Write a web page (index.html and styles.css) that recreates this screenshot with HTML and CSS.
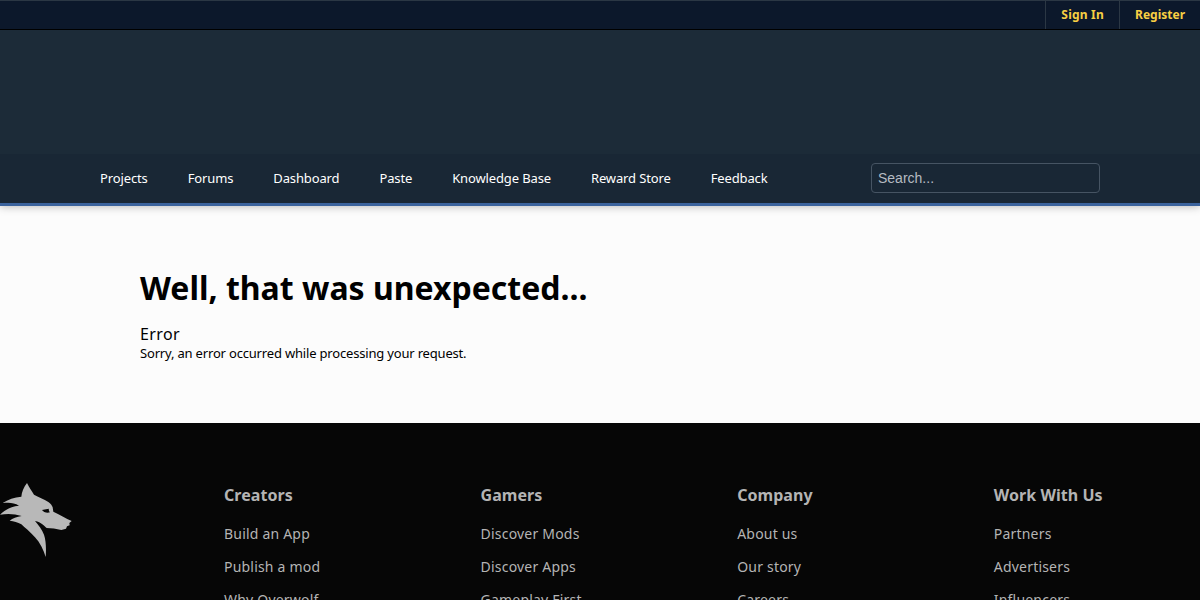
FILE: index.html
```html
<!DOCTYPE html>
<html lang="en">
<head>
    <meta charset="UTF-8">
    <meta name="viewport" content="width=device-width, initial-scale=1.0">
    <title>Error</title>
    <link rel="stylesheet" href="styles.css">
</head>
<body>

    <header class="header">
        <div class="user-bar">
            <a href="#" class="sign-in">Sign In</a>
            <a href="#">Register</a>
        </div>
        <div class="banner"></div>
        <div class="nav-bar">
            <nav class="main-nav">
                <a href="#">Projects</a>
                <a href="#">Forums</a>
                <a href="#">Dashboard</a>
                <a href="#">Paste</a>
                <a href="#">Knowledge Base</a>
                <a href="#">Reward Store</a>
                <a href="#">Feedback</a>
            </nav>
            <input class="search" type="text" placeholder="Search...">
        </div>
    </header>

    <main class="content">
        <h1>Well, that was unexpected...</h1>
        <h2>Error</h2>
        <p>Sorry, an error occurred while processing your request.</p>
    </main>

    <footer class="footer">
        <a href="#" class="footer-logo" aria-label="Overwolf">
            <svg viewBox="0 24 216 222" width="72" height="74">
                <path fill-rule="evenodd" d="M81 24 C87 36 95 48 102 59 C115 67 132 72 145 81 C152 86 156 91 158 97 L160 110 C178 119 198 130 215 138 L208 144 L209 151 L201 154 L198 161 L184 165 C169 161 154 160 140 159 C133 153 124 142 105 138 C116 151 126 163 132 179 C138 197 139 222 137 246 C131 225 120 203 105 187 C89 170 75 158 64 148 C53 141 42 139 29 137 C38 130 50 125 65 123 C44 116 22 115 0 119 C14 106 31 94 57 92 C42 82 26 82 8 84 C24 73 43 67 64 65 C65 51 71 37 81 24 Z M126 105 C130 111 140 115 150 112 C146 109 147 105 146 101 Z"/>
            </svg>
        </a>
        <div class="footer-links">
            <section>
                <h3>Creators</h3>
                <ul>
                    <li><a href="#">Build an App</a></li>
                    <li><a href="#">Publish a mod</a></li>
                    <li><a href="#">Why Overwolf</a></li>
                </ul>
            </section>
            <section>
                <h3>Gamers</h3>
                <ul>
                    <li><a href="#">Discover Mods</a></li>
                    <li><a href="#">Discover Apps</a></li>
                    <li><a href="#">Gameplay First</a></li>
                </ul>
            </section>
            <section>
                <h3>Company</h3>
                <ul>
                    <li><a href="#">About us</a></li>
                    <li><a href="#">Our story</a></li>
                    <li><a href="#">Careers</a></li>
                </ul>
            </section>
            <section>
                <h3>Work With Us</h3>
                <ul>
                    <li><a href="#">Partners</a></li>
                    <li><a href="#">Advertisers</a></li>
                    <li><a href="#">Influencers</a></li>
                </ul>
            </section>
        </div>
    </footer>

</body>
</html>
```
FILE: styles.css
```css
* {
    box-sizing: border-box;
}

body {
    margin: 0;
    height: 100vh;
    overflow: hidden;
    display: flex;
    flex-direction: column;
    background: #fcfcfc;
    color: #000;
    font-family: "Noto Sans", sans-serif;
    font-size: 13px;
}

a {
    color: inherit;
    text-decoration: none;
}

/* Header */
.header {
    flex-shrink: 0;
    background: #1c2b38;
    border-bottom: 3px solid #3b639d;
    box-shadow: 0 1px 8px rgba(0, 0, 0, 0.25);
}

.user-bar {
    display: flex;
    justify-content: flex-end;
    height: 30px;
    background: #0c182b;
    border-top: 1px solid #2b3744;
    border-bottom: 1px solid #000;
}
.user-bar a {
    padding: 0 15px;
    border-left: 1px solid #2b3744;
    color: #f8cf43;
    font-size: 12px;
    font-weight: 700;
    line-height: 27px;
}
.user-bar .sign-in {
    letter-spacing: 0.22px;
}

.banner {
    height: 124px;
}

.nav-bar {
    display: flex;
    justify-content: space-between;
    align-items: center;
    height: 49px;
    padding: 0 100px 2px;
    background: #192735;
}
.main-nav {
    display: flex;
    gap: 40px;
    color: #fff;
    letter-spacing: -0.13px;
}

.search {
    width: 229px;
    height: 30px;
    padding: 0 6px;
    background: transparent;
    border: 1px solid #465463;
    border-radius: 4px;
    color: #fff;
    font: 14px "Liberation Sans", Arial, sans-serif;
}
.search::placeholder {
    color: #b5bbc2;
}

/* Error message */
.content {
    flex-shrink: 0;
    height: 217px;
    padding: 59px 140px 0;
}
.content h1 {
    margin: 0 0 13px;
    font-size: 32px;
    line-height: 46px;
}
.content h2 {
    margin: 0;
    font-size: 16px;
    font-weight: 400;
    line-height: 20px;
    letter-spacing: 0.4px;
}
.content p {
    margin: 0;
    line-height: 18px;
    letter-spacing: -0.18px;
}

/* Footer */
.footer {
    flex-shrink: 0;
    display: flex;
    height: 400px;
    padding-top: 60px;
    background: #060606;
    color: #b4b4b4;
}
.footer-logo {
    flex: 0 0 224px;
    fill: #b8b8b8;
}
.footer-links {
    display: grid;
    grid-template-columns: repeat(4, 256.6px);
    letter-spacing: 0.2px;
}
.footer h3 {
    margin: 0 0 17px;
    font-size: 16px;
    line-height: 24px;
    letter-spacing: 0.05px;
}
.footer ul {
    margin: 0;
    padding: 0;
    list-style: none;
}
.footer li {
    margin-bottom: 13px;
    font-size: 14px;
    line-height: 20px;
}
```
